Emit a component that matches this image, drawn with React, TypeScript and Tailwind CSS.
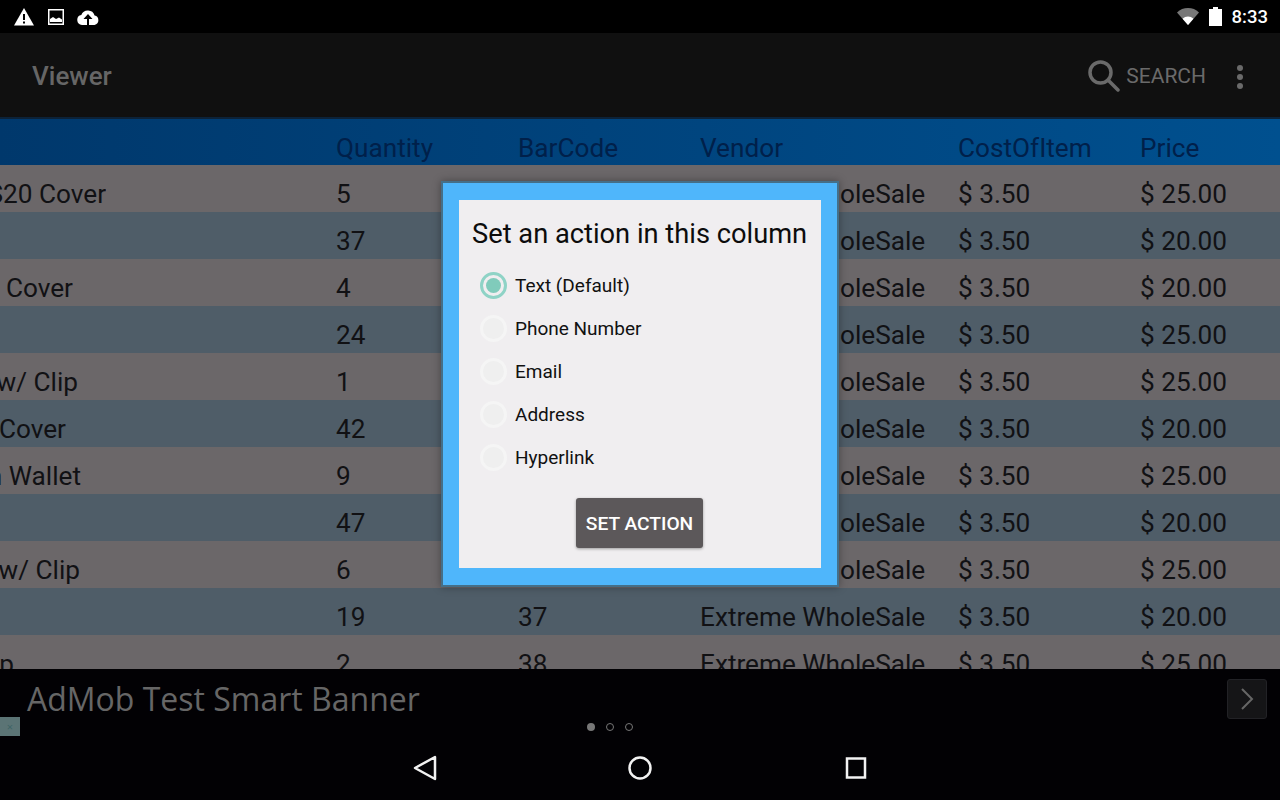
const rows = [
    { name: 'S20 Cover', end: 'w-[106px]', qty: '5', code: '30', price: '$ 25.00' },
    { name: '', end: 'w-[106px]', qty: '37', code: '31', price: '$ 20.00' },
    { name: 'Cover', end: 'w-[73px]', qty: '4', code: '32', price: '$ 20.00' },
    { name: '', end: 'w-[106px]', qty: '24', code: '33', price: '$ 25.00' },
    { name: 'Pouch w/ Clip', end: 'w-[78px]', qty: '1', code: '34', price: '$ 25.00' },
    { name: 'Cover', end: 'w-[66px]', qty: '42', code: '35', price: '$ 20.00' },
    { name: 'Skin Wallet', end: 'w-[81px]', qty: '9', code: '36', price: '$ 25.00' },
    { name: '', end: 'w-[106px]', qty: '47', code: '36', price: '$ 20.00' },
    { name: 'Pouch w/ Clip', end: 'w-[80px]', qty: '6', code: '36', price: '$ 25.00' },
    { name: '', end: 'w-[106px]', qty: '19', code: '37', price: '$ 20.00' },
    { name: 'Clip', end: 'w-[14px]', qty: '2', code: '38', price: '$ 25.00' },
];

const actions = ['Text (Default)', 'Phone Number', 'Email', 'Address', 'Hyperlink'];

const StatusBar = () => (
    <div className="flex h-[33px] shrink-0 items-center justify-between bg-black pl-[14px] pr-[12px]">
        <div className="flex items-center">
            <svg width="20" height="18" viewBox="0 0 20 18">
                <path d="M10 0 L20 17.5 H0 Z" fill="#fff" />
                <rect x="9" y="6" width="2" height="6" fill="#000" />
                <rect x="9" y="13.5" width="2" height="2" fill="#000" />
            </svg>
            <svg className="ml-[14px]" width="16" height="16" viewBox="0 0 16 16">
                <rect x="0.75" y="0.75" width="14.5" height="14.5" fill="none" stroke="#fff" strokeWidth="1.5" />
                <path d="M2 13 V10 L5 8 L8 10 L11 8.5 L14 10.5 V13 Z" fill="#fff" />
            </svg>
            <svg className="ml-[13px]" width="22" height="16" viewBox="0 0 22 16">
                <path d="M5 16 A5 5 0 0 1 4.3 6.1 A7 7 0 0 1 17.6 6.6 A4.8 4.8 0 0 1 17.5 16 Z" fill="#fff" />
                <path d="M11 5 L15.5 10 H12 V16 H10 V10 H6.500 Z" fill="#000" />
            </svg>
        </div>
        <div className="flex items-center">
            <svg width="22" height="17" viewBox="0 0 22 17">
                <path d="M0 4.500 A16 16 0 0 1 22 4.500 L11 17 Z" fill="#777" />
                <path d="M5.500 10.750 A8 8 0 0 1 16.500 10.750 L11 17 Z" fill="#fff" />
            </svg>
            <svg className="ml-[10px]" width="13" height="19" viewBox="0 0 13 19">
                <path d="M4 0 H9 V2 H13 V19 H0 V2 H4 Z" fill="#fff" />
            </svg>
            <span className="ml-[10px] pt-[2px] font-['Roboto',sans-serif] text-[18.500px] font-medium leading-none text-white">8:33</span>
        </div>
    </div>
);

const Toolbar = () => (
    <div className="flex h-[86px] shrink-0 items-center justify-between border-b-2 border-[#0c2238] bg-[#101010] pl-[32px] pr-[37px] pt-[3px]">
        <span className="font-['Roboto',sans-serif] text-[26px] font-medium text-[#666666]">Viewer</span>
        <div className="flex items-center text-[#6a6a6a]">
            <svg width="32" height="32" viewBox="0 0 32 32" fill="none" className="translate-y-[-1px]">
                <circle cx="12.500" cy="12.500" r="10.500" stroke="#6a6a6a" strokeWidth="3.500" />
                <path d="M20 20 L30 30" stroke="#6a6a6a" strokeWidth="3.500" strokeLinecap="round" />
            </svg>
            <span className="ml-[6px] font-['Roboto',sans-serif] text-[21px]">SEARCH</span>
            <div className="ml-[31px] flex flex-col gap-[3px]">
                <span className="h-[6px] w-[6px] rounded-full bg-[#6a6a6a]" />
                <span className="h-[6px] w-[6px] rounded-full bg-[#6a6a6a]" />
                <span className="h-[6px] w-[6px] rounded-full bg-[#6a6a6a]" />
            </div>
        </div>
    </div>
);

const TableView = () => (
    <div className="min-h-0 flex-1 overflow-hidden font-['Roboto',sans-serif] text-[26.200px] text-[#111114]">
        <div className="grid h-[46px] grid-cols-[336px_182px_182px_258px_182px_1fr] items-center bg-gradient-to-r from-[#00386c] to-[#00508f] pt-[10px] text-[#00204a]">
            <span />
            <span>Quantity</span>
            <span>BarCode</span>
            <span>Vendor</span>
            <span>CostOfItem</span>
            <span>Price</span>
        </div>
        {rows.map((row, i) => (
            <div
                key={i}
                className={`grid h-[47px] grid-cols-[336px_182px_182px_258px_182px_1fr] items-center whitespace-nowrap pt-[10px] ${i % 2 === 0 ? 'bg-[#6b6769]' : 'bg-[#4f5d68]'}`}
            >
                <div className={`flex justify-end overflow-hidden ${row.end}`}>
                    <span className="shrink-0">{row.name}</span>
                </div>
                <span>{row.qty}</span>
                <span>{row.code}</span>
                <span>Extreme WholeSale</span>
                <span>$ 3.50</span>
                <span>{row.price}</span>
            </div>
        ))}
    </div>
);

const ActionDialog = () => (
    <div className="absolute left-[441px] top-[181px] w-[398px] border-2 border-[#456f88] bg-[#4fb6fb] px-[16px] pb-[17px] pt-[17px] font-['Roboto',sans-serif] shadow-[0_0_8px_rgba(0,0,0,0.35)]">
        <div className="h-[368px] bg-[#f0eef0] pl-[13px]">
            <h2 className="pt-[16px] text-[27.250px] font-normal leading-[37px] text-[#0c0c0c]">Set an action in this column</h2>
            <div className="mt-[11px] flex flex-col">
                {actions.map((label, i) => (
                    <div key={label} className="flex h-[43px] items-center pl-[8px]">
                        {i === 0 ? (
                            <span className="flex h-[27px] w-[27px] items-center justify-center rounded-full border-[3px] border-[#8fd3c6]">
                                <span className="h-[15px] w-[15px] rounded-full bg-[#80cbbb]" />
                            </span>
                        ) : (
                            <span className="h-[27px] w-[27px] rounded-full border-[3px] border-[#f5f5f5] bg-[#efefef]" />
                        )}
                        <span className="ml-[8px] translate-y-[1px] text-[19px] text-[#111111]">{label}</span>
                    </div>
                ))}
            </div>
            <button className="ml-[104px] mt-[19px] h-[50px] w-[127px] rounded-[3px] bg-[#5c585a] pt-[3px] text-[19.200px] font-medium text-white shadow-[0_1px_3px_rgba(0,0,0,0.35)]">
                SET ACTION
            </button>
        </div>
    </div>
);

const BottomBar = () => (
    <div className="relative flex h-[131px] shrink-0 flex-col bg-[#020104]">
        <div className="flex h-[60px] items-center justify-between pl-[27px] pr-[13px]">
            <span className="font-['Open_Sans',sans-serif] text-[32px] text-[#666666]">AdMob Test Smart Banner</span>
            <div className="flex h-[40px] w-[40px] items-center justify-center rounded-[3px] border border-[#222226] bg-[#151517]">
                <svg width="14" height="22" viewBox="0 0 14 22" fill="none">
                    <path d="M2 1 L12 11 L2 21" stroke="#666" strokeWidth="2" />
                </svg>
            </div>
        </div>
        <div className="mt-[-9px] flex h-[14px] items-center justify-center gap-[11px] pr-[60px]">
            <span className="h-[8px] w-[8px] rounded-full bg-[#777777]" />
            <span className="h-[8px] w-[8px] rounded-full border border-[#777777]" />
            <span className="h-[8px] w-[8px] rounded-full border border-[#777777]" />
        </div>
        <div className="mt-[21px] flex items-center justify-center gap-[191.500px]">
            <svg width="24" height="26" viewBox="0 0 24 26" fill="none">
                <path d="M22 2 V24 L2 13 Z" stroke="#f2f2f2" strokeWidth="2.500" strokeLinejoin="round" />
            </svg>
            <svg width="24" height="24" viewBox="0 0 24 24" fill="none">
                <circle cx="12" cy="12" r="10.500" stroke="#f2f2f2" strokeWidth="2.500" />
            </svg>
            <svg width="24" height="24" viewBox="0 0 24 24" fill="none">
                <rect x="3" y="2.500" width="18" height="19" stroke="#f2f2f2" strokeWidth="2.500" />
            </svg>
        </div>
        <div className="absolute left-0 top-[48px] flex h-[19px] w-[20px] items-center justify-center bg-[#5b7475] text-[11px] leading-none text-[#3f6466]">
            ×
        </div>
    </div>
);

export default function App() {
    return (
        <div className="relative flex h-[800px] w-[1280px] flex-col overflow-hidden bg-black">
            <StatusBar />
            <Toolbar />
            <TableView />
            <BottomBar />
            <ActionDialog />
        </div>
    );
}
